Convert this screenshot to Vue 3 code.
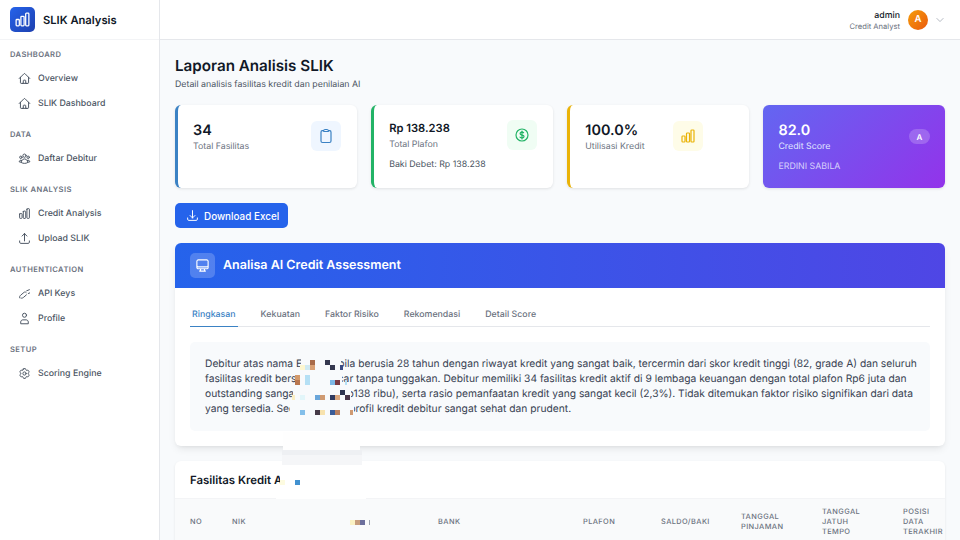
<template>
  <div class="layout">
    <aside class="sidebar">
      <div class="brand">
        <div class="brand-logo">
          <svg viewBox="0 0 24 24" class="icon-17"><path :d="icons.chart" /></svg>
        </div>
        <span class="brand-name">SLIK Analysis</span>
      </div>
      <nav class="nav">
        <div v-for="group in menu" :key="group.title" class="nav-group">
          <div class="nav-title">{{ group.title }}</div>
          <a v-for="item in group.items" :key="item.label" class="nav-item">
            <svg viewBox="0 0 24 24" class="icon-13"><path :d="icons[item.icon]" /></svg>
            <span>{{ item.label }}</span>
          </a>
        </div>
      </nav>
    </aside>

    <div class="content">
      <header class="topbar">
        <div class="user-text">
          <div class="user-name">admin</div>
          <div class="user-role">Credit Analyst</div>
        </div>
        <div class="avatar">A</div>
        <svg viewBox="0 0 24 24" class="chevron"><path d="M19.5 8.25l-7.5 7.5-7.5-7.5" /></svg>
      </header>

      <main class="main">
        <h1 class="page-title">Laporan Analisis SLIK</h1>
        <p class="page-sub">Detail analisis fasilitas kredit dan penilaian AI</p>

        <!-- Kartu ringkasan -->
        <section class="stats">
          <div class="stat blue">
            <div>
              <div class="stat-value">34</div>
              <div class="stat-label">Total Fasilitas</div>
            </div>
            <div class="stat-icon bg-blue">
              <svg viewBox="0 0 24 24" class="icon-16"><path :d="icons.clipboard" /></svg>
            </div>
          </div>
          <div class="stat green">
            <div>
              <div class="stat-value small">Rp 138.238</div>
              <div class="stat-label">Total Plafon</div>
              <div class="stat-extra">Baki Debet: Rp 138.238</div>
            </div>
            <div class="stat-icon bg-green">
              <svg viewBox="0 0 24 24" class="icon-16"><path :d="icons.dollar" /></svg>
            </div>
          </div>
          <div class="stat yellow">
            <div>
              <div class="stat-value">100.0%</div>
              <div class="stat-label">Utilisasi Kredit</div>
            </div>
            <div class="stat-icon bg-yellow">
              <svg viewBox="0 0 24 24" class="icon-16"><path :d="icons.chart" /></svg>
            </div>
          </div>
          <div class="stat score">
            <div>
              <div class="stat-value">82.0</div>
              <div class="stat-label">Credit Score</div>
              <div class="score-name">ERDINI SABILA</div>
            </div>
            <div class="grade">A</div>
          </div>
        </section>

        <button class="download">
          <svg viewBox="0 0 24 24" class="icon-13"><path :d="icons.download" /></svg>
          Download Excel
        </button>

        <!-- Analisa AI -->
        <section class="ai-card">
          <div class="ai-head">
            <div class="ai-icon">
              <svg viewBox="0 0 24 24" class="icon-15"><path :d="icons.desktop" /></svg>
            </div>
            <h2>Analisa AI Credit Assessment</h2>
          </div>
          <div class="ai-body">
            <div class="tabs">
              <span v-for="(tab, i) in tabs" :key="tab" class="tab" :class="{ active: i === 0 }">{{ tab }}</span>
            </div>
            <div class="summary">
              <p>Debitur atas nama Erdini Sabila berusia 28 tahun dengan riwayat kredit yang sangat baik, tercermin dari skor kredit tinggi (82, grade A) dan seluruh fasilitas kredit berstatus lancar tanpa tunggakan. Debitur memiliki 34 fasilitas kredit aktif di 9 lembaga keuangan dengan total plafon Rp6 juta dan outstanding sangat rendah (Rp138 ribu), serta rasio pemanfaatan kredit yang sangat kecil (2,3%). Tidak ditemukan faktor risiko signifikan dari data yang tersedia. Secara umum, profil kredit debitur sangat sehat dan prudent.</p>
            </div>
          </div>
        </section>

        <!-- Tabel fasilitas -->
        <section class="table-card">
          <h3>Fasilitas Kredit Aktif</h3>
          <div class="table-head">
            <span v-for="col in columns" :key="col">{{ col }}</span>
          </div>
        </section>
      </main>
    </div>

    <!-- area yang disamarkan -->
    <div class="masks">
      <i v-for="(m, i) in masks" :key="'m' + i" :style="boxStyle(m)"></i>
      <i v-for="(p, i) in pixels" :key="'p' + i" :style="boxStyle(p)"></i>
    </div>
  </div>
</template>

<script setup>
const icons = {
  home: 'M2.25 12l8.954-8.955c.44-.439 1.152-.439 1.591 0L21.75 12M4.5 9.75v10.125c0 .621.504 1.125 1.125 1.125H9.75v-4.875c0-.621.504-1.125 1.125-1.125h2.25c.621 0 1.125.504 1.125 1.125V21h4.125c.621 0 1.125-.504 1.125-1.125V9.75M8.25 21h8.25',
  chart: 'M3 13.125C3 12.504 3.504 12 4.125 12h2.25c.621 0 1.125.504 1.125 1.125v6.75C7.5 20.496 6.996 21 6.375 21h-2.25A1.125 1.125 0 013 19.875v-6.75zM9.75 8.625c0-.621.504-1.125 1.125-1.125h2.25c.621 0 1.125.504 1.125 1.125v11.25c0 .621-.504 1.125-1.125 1.125h-2.25a1.125 1.125 0 01-1.125-1.125V8.625zM16.5 4.125c0-.621.504-1.125 1.125-1.125h2.25C20.496 3 21 3.504 21 4.125v15.75c0 .621-.504 1.125-1.125 1.125h-2.25a1.125 1.125 0 01-1.125-1.125V4.125z',
  users: 'M18 18.72a9.094 9.094 0 003.741-.479 3 3 0 00-4.682-2.72m.94 3.198l.001.031c0 .225-.012.447-.037.666A11.944 11.944 0 0112 21c-2.17 0-4.207-.576-5.963-1.584A6.062 6.062 0 016 18.719m12 0a5.971 5.971 0 00-.941-3.197m0 0A5.995 5.995 0 0012 12.75a5.995 5.995 0 00-5.058 2.772m0 0a3 3 0 00-4.681 2.72 8.986 8.986 0 003.74.477m.94-3.197a5.971 5.971 0 00-.94 3.197M15 6.75a3 3 0 11-6 0 3 3 0 016 0zm6 3a2.25 2.25 0 11-4.5 0 2.25 2.25 0 014.5 0zm-13.5 0a2.25 2.25 0 11-4.5 0 2.25 2.25 0 014.5 0z',
  upload: 'M3 16.5v2.25A2.25 2.25 0 005.25 21h13.5A2.25 2.25 0 0021 18.75V16.5m-13.5-9L12 3m0 0l4.5 4.5M12 3v13.5',
  download: 'M3 16.5v2.25A2.25 2.25 0 005.25 21h13.5A2.25 2.25 0 0021 18.75V16.5M16.5 12L12 16.5m0 0L7.5 12m4.5 4.5V3',
  key: 'M3 20c-.6-2 .4-3.6 2-5l6-5c1.4-1.2 3-1 4 0M5.5 20.5c2 .6 3.5-.3 5-1.6l5-4.4M16 7l5-2M19 12l2.5-1',
  user: 'M15.75 6a3.75 3.75 0 11-7.5 0 3.75 3.75 0 017.5 0zM5 21v-2.5c0-2.5 2-4 4-4h6c2 0 4 1.5 4 4V21z',
  cog: 'M9.594 3.94c.09-.542.56-.94 1.11-.94h2.593c.55 0 1.02.398 1.11.94l.213 1.281c.063.374.313.686.645.87.074.04.147.083.22.127.324.196.72.257 1.075.124l1.217-.456a1.125 1.125 0 011.37.49l1.296 2.247a1.125 1.125 0 01-.26 1.431l-1.003.827c-.293.24-.438.613-.431.992a6.759 6.759 0 010 .255c-.007.378.138.75.43.99l1.005.828c.424.35.534.954.26 1.43l-1.298 2.247a1.125 1.125 0 01-1.369.491l-1.217-.456c-.355-.133-.75-.072-1.076.124a6.57 6.57 0 01-.22.128c-.331.183-.581.495-.644.869l-.213 1.28c-.09.543-.56.941-1.11.941h-2.594c-.55 0-1.02-.398-1.11-.94l-.213-1.281c-.062-.374-.312-.686-.644-.87a6.52 6.52 0 01-.22-.127c-.325-.196-.72-.257-1.076-.124l-1.217.456a1.125 1.125 0 01-1.369-.49l-1.297-2.247a1.125 1.125 0 01.26-1.431l1.004-.827c.292-.24.437-.613.43-.992a6.932 6.932 0 010-.255c.007-.378-.138-.75-.43-.99l-1.004-.828a1.125 1.125 0 01-.26-1.43l1.297-2.247a1.125 1.125 0 011.37-.491l1.216.456c.356.133.751.072 1.076-.124.072-.044.146-.087.22-.128.332-.183.582-.495.644-.869l.214-1.281zM15 12a3 3 0 11-6 0 3 3 0 016 0z',
  clipboard: 'M15.666 3.888A2.25 2.25 0 0013.5 2.25h-3c-1.03 0-1.9.693-2.166 1.638m7.332 0c.055.194.084.4.084.612v0a.75.75 0 01-.75.75H9a.75.75 0 01-.75-.75v0c0-.212.03-.418.084-.612m7.332 0c.646.049 1.288.11 1.927.184 1.1.128 1.907 1.077 1.907 2.185V19.5a2.25 2.25 0 01-2.25 2.25H6.75A2.25 2.25 0 014.5 19.5V6.257c0-1.108.806-2.057 1.907-2.185a48.208 48.208 0 011.927-.184',
  dollar: 'M12 6v12m-3-2.818l.879.659c1.171.879 3.07.879 4.242 0 1.172-.879 1.172-2.303 0-3.182C13.536 12.219 12.768 12 12 12c-.725 0-1.45-.22-2.003-.659-1.106-.879-1.106-2.303 0-3.182s2.9-.879 4.006 0l.415.33M21 12a9 9 0 11-18 0 9 9 0 0118 0z',
  desktop: 'M9 17.25v1.007a3 3 0 01-.879 2.122L7.5 21h9l-.621-.621A3 3 0 0115 18.257V17.25m6-12V15a2.25 2.25 0 01-2.25 2.25H5.25A2.25 2.25 0 013 15V5.25m18 0A2.25 2.25 0 0018.75 3H5.25A2.25 2.25 0 003 5.25m18 0V12a2.25 2.25 0 01-2.25 2.25H5.25A2.25 2.25 0 013 12V5.25'
}

const menu = [
  { title: 'DASHBOARD', items: [{ label: 'Overview', icon: 'home' }, { label: 'SLIK Dashboard', icon: 'home' }] },
  { title: 'DATA', items: [{ label: 'Daftar Debitur', icon: 'users' }] },
  { title: 'SLIK ANALYSIS', items: [{ label: 'Credit Analysis', icon: 'chart' }, { label: 'Upload SLIK', icon: 'upload' }] },
  { title: 'AUTHENTICATION', items: [{ label: 'API Keys', icon: 'key' }, { label: 'Profile', icon: 'user' }] },
  { title: 'SETUP', items: [{ label: 'Scoring Engine', icon: 'cog' }] }
]

const tabs = ['Ringkasan', 'Kekuatan', 'Faktor Risiko', 'Rekomendasi', 'Detail Score']
const columns = ['NO', 'NIK', '', 'BANK', 'PLAFON', 'SALDO/BAKI', 'TANGGAL PINJAMAN', 'TANGGAL JATUH TEMPO', 'POSISI DATA TERAKHIR']

// [x, y, w, h, warna]
const masks = [
  [301, 356, 40, 15, '#f8fafc'],
  [295, 371, 47, 15, '#f8fafc'],
  [293, 386, 58, 15, '#f8fafc'],
  [290, 401, 64, 16, '#f8fafc'],
  [283, 432, 77, 18, '#fefefe'],
  [282, 450, 80, 5, '#eef0f3'],
  [282, 455, 80, 10, '#f5f6f8'],
  [280, 465, 86, 25, '#ffffff'],
  [276, 490, 90, 9, '#ffffff']
]

const pixels = [
  [310, 360, 5, 5, '#a86b4a'], [310, 365, 5, 5, '#d9a074'], [300, 365, 5, 5, '#fdf6d0'], [305, 365, 5, 5, '#cfe9f2'],
  [325, 360, 5, 5, '#34384f'], [330, 365, 5, 5, '#34384f'], [340, 365, 3, 5, '#3a4a82'],
  [295, 375, 5, 5, '#d39a6c'], [295, 380, 5, 5, '#b9774f'], [305, 375, 5, 10, '#b5e0f5'],
  [330, 380, 5, 5, '#7db8e6'], [335, 380, 5, 5, '#7a3a42'], [345, 380, 2, 5, '#b5e0f5'],
  [340, 390, 5, 5, '#2f3550'], [292, 395, 3, 5, '#fbeec4'], [300, 395, 5, 5, '#e2f6fa'],
  [315, 395, 5, 5, '#6aa6da'], [320, 395, 5, 5, '#cf9a72'], [330, 395, 5, 5, '#2f3a60'],
  [335, 395, 5, 5, '#d9a67e'], [345, 395, 5, 5, '#4a3648'],
  [300, 410, 5, 5, '#84bfea'], [315, 410, 5, 5, '#463a48'], [320, 410, 5, 5, '#f7e2ae'],
  [330, 410, 5, 5, '#3a5c98'], [335, 410, 5, 5, '#b98060'], [350, 410, 3, 5, '#cf9a72'],
  [280, 480, 5, 5, '#fdfbe0'], [295, 480, 5, 5, '#4291d0'],
  [350, 520, 5, 5, '#fbf2c4'], [355, 520, 5, 5, '#c79d7c'], [360, 520, 5, 5, '#6c6f9c'], [369, 520, 1, 5, '#9ca3af']
]

function boxStyle([x, y, w, h, color]) {
  return { left: x + 'px', top: y + 'px', width: w + 'px', height: h + 'px', background: color }
}
</script>

<style>
html, body { margin: 0; background: #f8fafc; }
</style>

<style scoped>
* { box-sizing: border-box; }

.layout {
  position: relative;
  display: flex;
  width: 960px;
  height: 540px;
  overflow: hidden;
  font-family: Inter, "Liberation Sans", sans-serif;
  text-rendering: geometricPrecision;
  background: #f8fafc;
  color: #111827;
}

svg {
  fill: none;
  stroke: currentColor;
  stroke-width: 1.8;
  stroke-linecap: round;
  stroke-linejoin: round;
  flex-shrink: 0;
}
.icon-13 { width: 13px; height: 13px; }
.icon-15 { width: 15px; height: 15px; }
.icon-16 { width: 16px; height: 16px; }
.icon-17 { width: 17px; height: 17px; }

/* sidebar */
.sidebar {
  width: 160px;
  flex-shrink: 0;
  background: #fff;
  border-right: 1px solid #e5e7eb;
}
.brand {
  display: flex;
  align-items: center;
  gap: 8px;
  height: 40px;
  padding: 0 10px;
  border-bottom: 1px solid #f3f4f6;
}
.brand-logo {
  width: 25px;
  height: 25px;
  border-radius: 5px;
  background: linear-gradient(135deg, #2563eb, #1e40af);
  color: #fff;
  display: flex;
  align-items: center;
  justify-content: center;
}
.brand-name { font-size: 11.2px; font-weight: 600; }
.nav { padding-top: 8px; }
.nav-group { margin-bottom: 12.5px; }
.nav-title {
  padding: 1px 10px 0;
  height: 13px;
  line-height: 12px;
  font-size: 7.6px;
  font-weight: 600;
  letter-spacing: 0.4px;
  color: #6b7280;
  margin-bottom: 4.5px;
}
.nav-item {
  display: flex;
  align-items: center;
  gap: 7.5px;
  height: 25px;
  padding-left: 17.5px;
  font-size: 8.8px;
  font-weight: 500;
  color: #4b5563;
}

/* topbar */
.content { flex: 1; min-width: 0; display: flex; flex-direction: column; }
.topbar {
  height: 40px;
  flex-shrink: 0;
  background: #fff;
  border-bottom: 1px solid #e5e7eb;
  display: flex;
  align-items: center;
  justify-content: flex-end;
  padding-right: 15px;
}
.user-text { text-align: right; margin-right: 8px; padding-top: 1px; }
.user-name { font-size: 8.8px; font-weight: 500; line-height: 13px; }
.user-role { font-size: 7.6px; color: #6b7280; line-height: 10px; }
.avatar {
  width: 20px;
  height: 20px;
  border-radius: 50%;
  background: linear-gradient(135deg, #f59e0b, #ea580c);
  color: #fff;
  font-size: 9.6px;
  font-weight: 600;
  display: flex;
  align-items: center;
  justify-content: center;
}
.chevron { width: 10px; height: 10px; margin-left: 7px; color: #9ca3af; }

/* main */
.main { padding: 15px 15px 0; }
.page-title { margin: 0; padding-top: 1px; font-size: 15.2px; font-weight: 600; line-height: 20px; }
.page-sub { margin: 2px 0 0; font-size: 8.8px; line-height: 14px; color: #4b5563; }

.stats {
  display: grid;
  grid-template-columns: repeat(4, 1fr);
  gap: 14.6px;
  margin-top: 13px;
}
.stat {
  height: 83px;
  background: #fff;
  border-radius: 6px;
  padding: 16px 16px 0 15px;
  display: flex;
  align-items: flex-start;
  justify-content: space-between;
  box-shadow: 0 1px 3px rgba(0, 0, 0, 0.1);
}
.stat.blue { border-left: 3px solid #3b82c4; }
.stat.green { border-left: 3px solid #22b366; }
.stat.yellow { border-left: 3px solid #eab308; padding-right: 46px; }
.stat-value { font-size: 14.4px; font-weight: 600; line-height: 19px; }
.stat-value.small { font-size: 11.2px; line-height: 15px; margin-bottom: 2px; }
.stat-label { font-size: 8.8px; line-height: 13px; color: #6b7280; }
.stat-extra { font-size: 8.8px; line-height: 13px; color: #4b5563; margin-top: 7px; }
.stat-icon {
  width: 30px;
  height: 30px;
  border-radius: 6px;
  display: flex;
  align-items: center;
  justify-content: center;
}
.stat.green .stat-icon { margin-top: -1px; }
.bg-blue { background: #eff6ff; color: #3b82c4; }
.bg-green { background: #f0fdf4; color: #22b366; }
.bg-yellow { background: #fefce8; color: #eab308; }

.stat.score {
  background: linear-gradient(135deg, #6366f1, #9333ea);
  color: #fff;
  padding: 16px 15px 0 15px;
}
.stat.score .stat-label { color: #e0e7ff; }
.score-name { font-size: 8.8px; line-height: 13px; margin-top: 7px; color: #d8cffb; }
.grade {
  width: 21px;
  height: 15px;
  margin-top: 8px;
  border-radius: 8px;
  background: rgba(255, 255, 255, 0.2);
  font-size: 8px;
  font-weight: 600;
  display: flex;
  align-items: center;
  justify-content: center;
}

.download {
  display: flex;
  align-items: center;
  gap: 5px;
  width: 113px;
  height: 25px;
  margin-top: 15px;
  padding: 0 11px;
  border: none;
  border-radius: 5px;
  background: #2563eb;
  color: #fff;
  font-family: inherit;
  font-size: 9.9px;
  font-weight: 500;
  white-space: nowrap;
}

.ai-card {
  margin-top: 15px;
  height: 203px;
  background: #fff;
  border-radius: 6px;
  overflow: hidden;
  box-shadow: 0 4px 8px -2px rgba(0, 0, 0, 0.1), 0 2px 4px -2px rgba(0, 0, 0, 0.06);
}
.ai-head {
  height: 45px;
  padding: 0 15px;
  display: flex;
  align-items: center;
  gap: 8px;
  background: linear-gradient(90deg, #2563eb, #4f46e5);
  color: #fff;
}
.ai-icon {
  width: 25px;
  height: 25px;
  border-radius: 5px;
  background: rgba(255, 255, 255, 0.2);
  display: flex;
  align-items: center;
  justify-content: center;
}
.ai-head h2 { margin: 0; font-size: 12.5px; font-weight: 600; }
.ai-body { padding: 15px 15px 0; }
.tabs {
  display: flex;
  gap: 21px;
  height: 24px;
  border-bottom: 1px solid #e5e7eb;
}
.tab {
  padding: 5px 2px 0;
  font-size: 8.8px;
  font-weight: 500;
  color: #6b7280;
  line-height: 13px;
}
.tab.active {
  color: #3b82c4;
  border-bottom: 1px solid #3b82c4;
  height: 24px;
}
.summary {
  margin-top: 15px;
  height: 89px;
  padding: 15px 10px 0 15px;
  border-radius: 5px;
  background: #f8fafc;
}
.summary p {
  margin: 0;
  font-size: 10.25px;
  line-height: 15px;
  color: #374151;
}

.table-card {
  margin-top: 15px;
  background: #fff;
  border-radius: 6px 6px 0 0;
  box-shadow: 0 1px 3px rgba(0, 0, 0, 0.08);
}
.table-card h3 {
  margin: 0;
  height: 38px;
  padding: 0 15px;
  display: flex;
  align-items: center;
  font-size: 11.4px;
  font-weight: 600;
  border-bottom: 1px solid #f3f4f6;
}
.table-head {
  display: grid;
  grid-template-columns: 42px 118px 88px 145px 78px 80px 81px 81px 42px;
  align-items: center;
  height: 46px;
  padding-left: 15px;
  background: #f9fafb;
  font-size: 7.4px;
  font-weight: 500;
  letter-spacing: 0.4px;
  line-height: 10px;
  color: #6b7280;
}
.table-head span:nth-child(n + 7) { padding-right: 30px; }
.table-head span:last-child { padding-right: 0; }

.masks { position: absolute; inset: 0; pointer-events: none; }
.masks i { position: absolute; display: block; }
</style>
